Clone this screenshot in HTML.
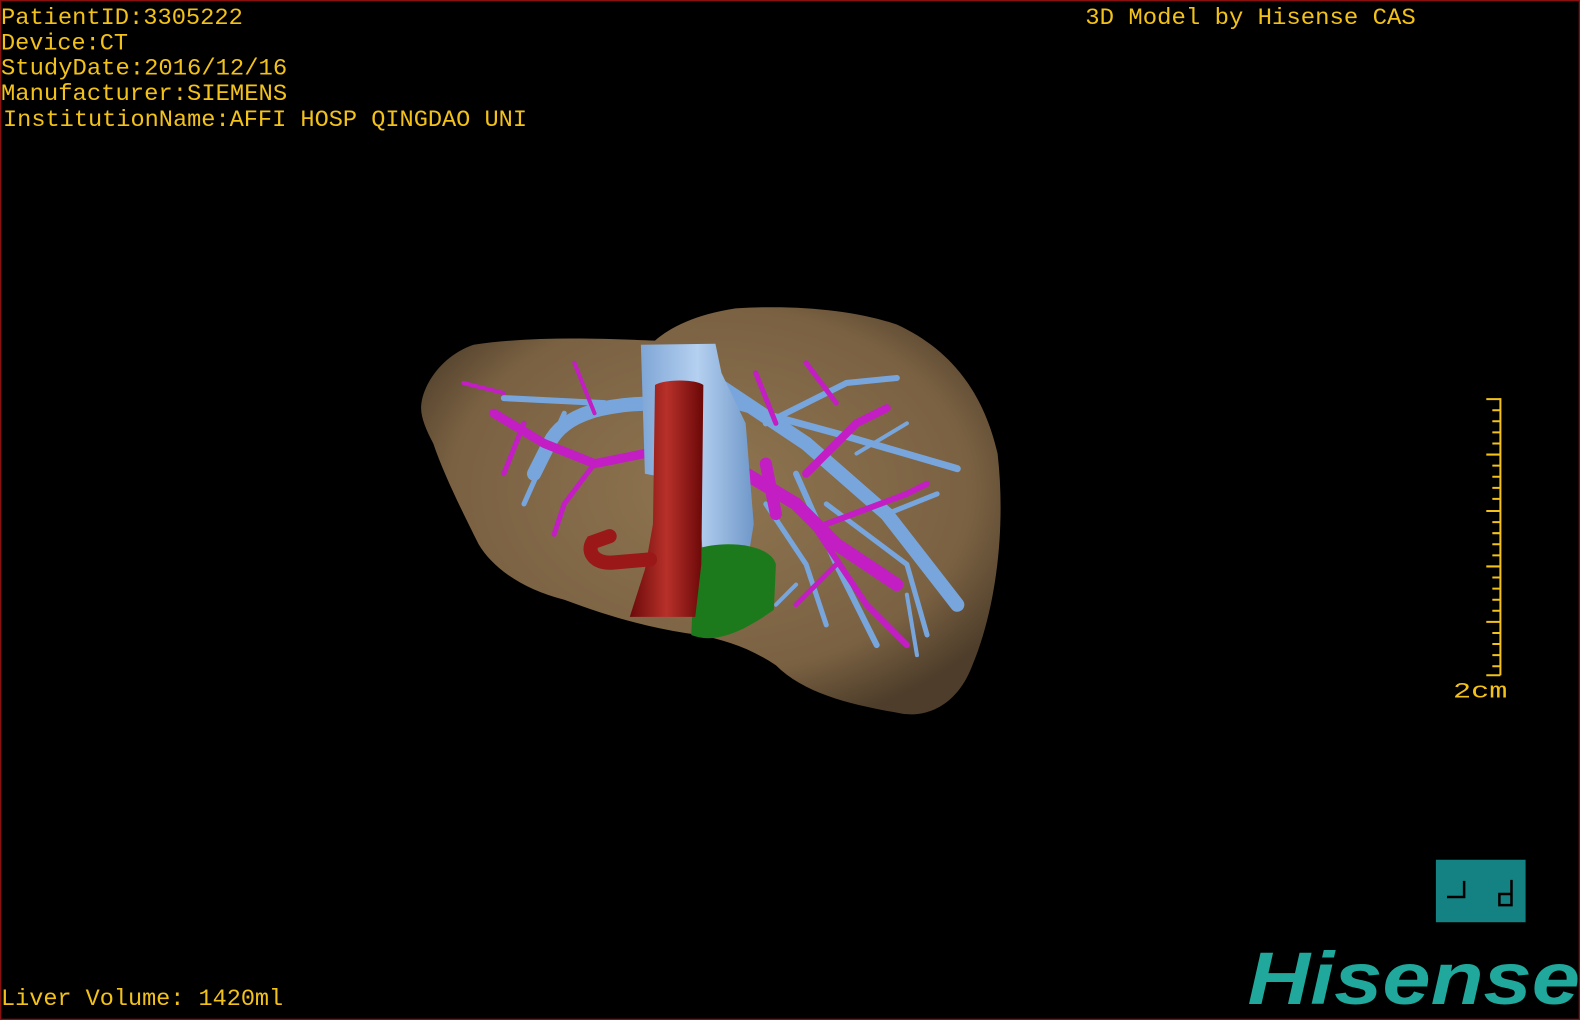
<!DOCTYPE html>
<html><head><meta charset="utf-8"><style>
html,body{margin:0;padding:0;background:#000;width:1580px;height:1020px;overflow:hidden}
svg{display:block}
.m{font-family:"Liberation Mono",monospace}
</style></head><body>
<svg width="1580" height="1020" viewBox="0 0 1568 1012" preserveAspectRatio="none" xmlns="http://www.w3.org/2000/svg">
<defs>
<radialGradient id="lv" cx="0.5" cy="0.45" r="0.6">
<stop offset="0" stop-color="#8f7550"/><stop offset="0.75" stop-color="#7a6142"/><stop offset="1" stop-color="#4d3d2a"/>
</radialGradient>
<linearGradient id="ivc" x1="0" x2="1"><stop offset="0" stop-color="#7fa6d6"/><stop offset="0.5" stop-color="#b5d0f0"/><stop offset="1" stop-color="#6f98c9"/></linearGradient>
<linearGradient id="ao" x1="0" x2="1"><stop offset="0" stop-color="#6a0a0a"/><stop offset="0.5" stop-color="#b8302a"/><stop offset="1" stop-color="#6a0808"/></linearGradient>
</defs>
<rect width="1568" height="1012" fill="#000"/>
<rect x="0.5" y="0.5" width="1567" height="1011" fill="none" stroke="#8a1010" stroke-width="1.5"/>
<!-- liver -->
<path d="M418,402 C420,380 440,352 470,342 C530,333 600,336 650,338 C665,325 690,312 730,306 C790,302 850,308 890,322 C940,345 975,385 990,450 C998,520 990,600 965,660 C950,700 920,712 895,708 C850,700 800,690 770,660 C740,640 710,632 680,628 C640,622 600,610 560,595 C520,585 490,565 475,540 C460,510 440,470 430,440 C422,425 417,412 418,402 Z" fill="url(#lv)"/>
<!-- blue hepatic veins -->
<g fill="none" stroke="#78a6dc" stroke-linecap="round">
<path d="M710,380 L800,440 L880,510 L950,600" stroke-width="14"/>
<path d="M660,400 C600,400 560,410 545,440 L530,470" stroke-width="14"/>
<path d="M500,395 L600,400" stroke-width="6"/>
<path d="M720,400 L830,430 L950,465" stroke-width="7"/>
<path d="M760,420 L840,380 L890,375" stroke-width="6"/>
<path d="M790,470 L830,560 L870,640" stroke-width="6"/>
<path d="M820,500 L900,560 L920,630" stroke-width="5"/>
<path d="M760,500 L800,560 L820,620" stroke-width="5"/>
<path d="M880,510 L930,490" stroke-width="5"/>
<path d="M560,410 L520,500" stroke-width="5"/>
<path d="M850,450 L900,420" stroke-width="4"/>
<path d="M900,590 L910,650" stroke-width="4"/>
<path d="M790,580 L770,600" stroke-width="4"/>
</g>
<!-- magenta portal -->
<g fill="none" stroke="#c21ec4" stroke-linecap="round">
<path d="M640,450 L590,460 L540,440 L490,410" stroke-width="9"/>
<path d="M590,460 L560,500 L550,530" stroke-width="5"/>
<path d="M520,420 L500,470" stroke-width="5"/>
<path d="M460,380 L500,390" stroke-width="4"/>
<path d="M570,360 L590,410" stroke-width="4"/>
<path d="M740,470 L790,500 L830,540 L890,580" stroke-width="13"/>
<path d="M800,510 L860,600 L900,640" stroke-width="6"/>
<path d="M800,470 L850,420 L880,405" stroke-width="8"/>
<path d="M820,520 L900,490 L920,480" stroke-width="6"/>
<path d="M750,370 L770,420" stroke-width="5"/>
<path d="M800,360 L830,400" stroke-width="5"/>
<path d="M830,560 L790,600" stroke-width="5"/>
<path d="M760,460 L770,510" stroke-width="12"/>
</g>
<!-- IVC -->
<path d="M636,342 L710,341 L716,370 L740,420 L748,520 L738,580 L700,582 L692,480 L640,470 Z" fill="url(#ivc)"/>
<!-- gallbladder -->
<path d="M690,545 C720,535 765,540 770,560 L768,605 C740,625 710,640 686,630 Z" fill="#1c7a1c"/>
<!-- aorta -->
<path d="M650,382 C660,376 690,376 698,382 L696,560 L690,612 L625,612 L640,565 L648,520 Z" fill="url(#ao)"/>
<path d="M645,555 L610,558 C590,560 582,548 588,538 L605,532" fill="none" stroke="#9a1818" stroke-width="14" stroke-linecap="round"/>
<!-- text -->
<g fill="#f2c21a" font-size="23" class="m">
<text x="1" y="24" textLength="240" lengthAdjust="spacingAndGlyphs">PatientID:3305222</text>
<text x="1" y="49" textLength="126" lengthAdjust="spacingAndGlyphs">Device:CT</text>
<text x="1" y="74" textLength="284" lengthAdjust="spacingAndGlyphs">StudyDate:2016/12/16</text>
<text x="1" y="99" textLength="284" lengthAdjust="spacingAndGlyphs">Manufacturer:SIEMENS</text>
<text x="3" y="125" textLength="520" lengthAdjust="spacingAndGlyphs">InstitutionName:AFFI HOSP QINGDAO UNI</text>
<text x="1077" y="24" textLength="328" lengthAdjust="spacingAndGlyphs">3D Model by Hisense CAS</text>
<text x="1" y="997" textLength="280" lengthAdjust="spacingAndGlyphs">Liver Volume: 1420ml</text>
<text x="1442" y="692" font-size="22" textLength="54" lengthAdjust="spacingAndGlyphs">2cm</text>
</g>
<!-- scale bar -->
<g stroke="#f2c21a" stroke-width="2">
<line x1="1489" y1="395" x2="1489" y2="670"/>
<path d="M1475,396H1489 M1481,407H1489 M1481,418H1489 M1481,429H1489 M1481,440H1489 M1475,451H1489 M1481,462H1489 M1481,473H1489 M1481,484H1489 M1481,495H1489 M1475,507H1489 M1481,518H1489 M1481,529H1489 M1481,540H1489 M1481,551H1489 M1475,562H1489 M1481,573H1489 M1481,584H1489 M1481,595H1489 M1481,606H1489 M1475,617H1489 M1481,628H1489 M1481,639H1489 M1481,650H1489 M1481,661H1489 M1475,670H1489"/>
</g>
<!-- orientation box -->
<rect x="1425" y="853" width="89" height="62" fill="#148282"/>
<g stroke="#000" stroke-width="2.5" fill="none">
<path d="M1436,890H1453V874"/>
<path d="M1500,873V898H1488V887H1500"/>
</g>
<!-- Hisense logo -->
<text x="1238" y="996" style="font-family:'Liberation Sans',sans-serif;font-weight:bold;font-style:italic" font-size="74" fill="#1fa89b" textLength="330" lengthAdjust="spacingAndGlyphs">Hisense</text>
</svg>
</body></html>
